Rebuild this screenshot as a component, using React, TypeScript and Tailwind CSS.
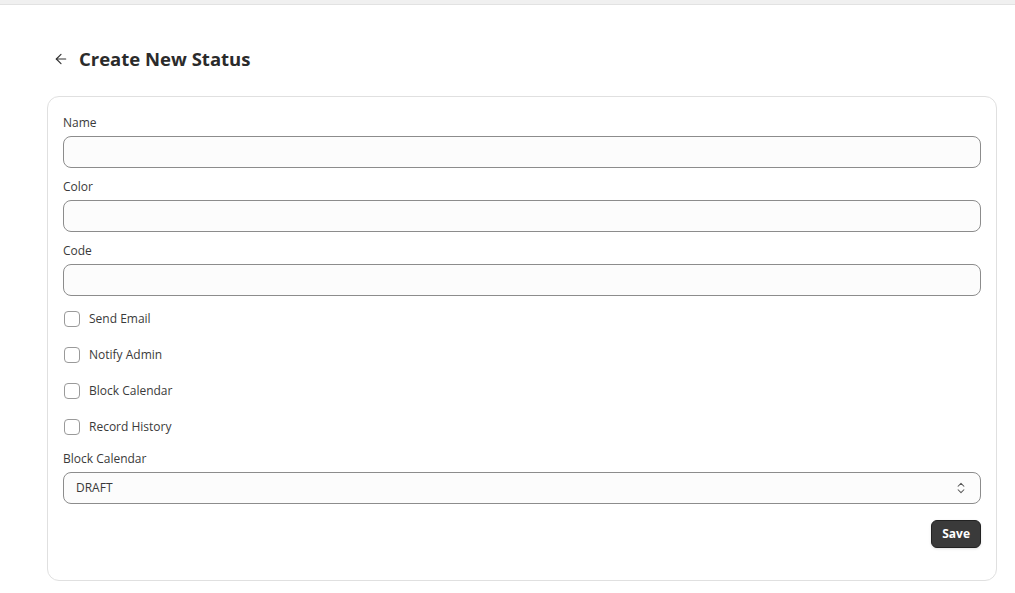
import { ArrowLeft, ChevronsUpDown } from "lucide-react";

const fields = ["Name", "Color", "Code"];
const checks = ["Send Email", "Notify Admin", "Block Calendar", "Record History"];

export default function App() {
  return (
    <div className="min-h-screen bg-white font-['Open_Sans',sans-serif] text-[#3a3a3a]">
      <div className="h-[5px] bg-[#f0f0f0] border-b border-[#e2e2e2]" />
      <div className="px-[47px] pr-[18px]">
        {/* header */}
        <div className="flex items-center gap-[10px] pl-[6px] pt-[42px] pb-[25px]">
          <ArrowLeft size={16} strokeWidth={1.75} className="text-[#333]" />
          <h1 className="text-[18.5px] font-bold leading-[24px] text-[#2b2b2b]">Create New Status</h1>
        </div>

        {/* form card */}
        <div className="rounded-xl border border-[#e0e0e0] px-[15px] pt-4 pb-8">
          {fields.map((f, i) => (
            <div key={f} className={i === fields.length - 1 ? "mb-[5px]" : "mb-[9px]"}>
              <label className="block text-[12px] leading-5 mb-[3px]">{f}</label>
              <input className="w-full h-8 rounded-lg border border-[#8c8c8c] bg-[#fcfcfc] px-3 text-[12px] outline-none" />
            </div>
          ))}

          {checks.map((c) => (
            <label key={c} className="flex items-center h-9 gap-[9px] pl-[1px] text-[12px]">
              <span className="w-4 h-4 rounded-[4px] border border-[#9a9a9a] bg-white" />
              {c}
            </label>
          ))}

          <div className="mt-1">
            <label className="block text-[12px] leading-5 mb-[3px]">Block Calendar</label>
            <div className="flex items-center justify-between h-8 rounded-lg border border-[#8c8c8c] bg-[#fcfcfc] pl-3 pr-3 text-[12px]">
              <span>DRAFT</span>
              <ChevronsUpDown size={14} strokeWidth={1.75} className="text-[#555]" />
            </div>
          </div>

          <div className="flex justify-end mt-4">
            <button className="h-7 px-[10px] rounded-md bg-[#3a3a3a] border border-[#222] text-white text-[12px] font-bold shadow-sm">
              Save
            </button>
          </div>
        </div>
      </div>
    </div>
  );
}
